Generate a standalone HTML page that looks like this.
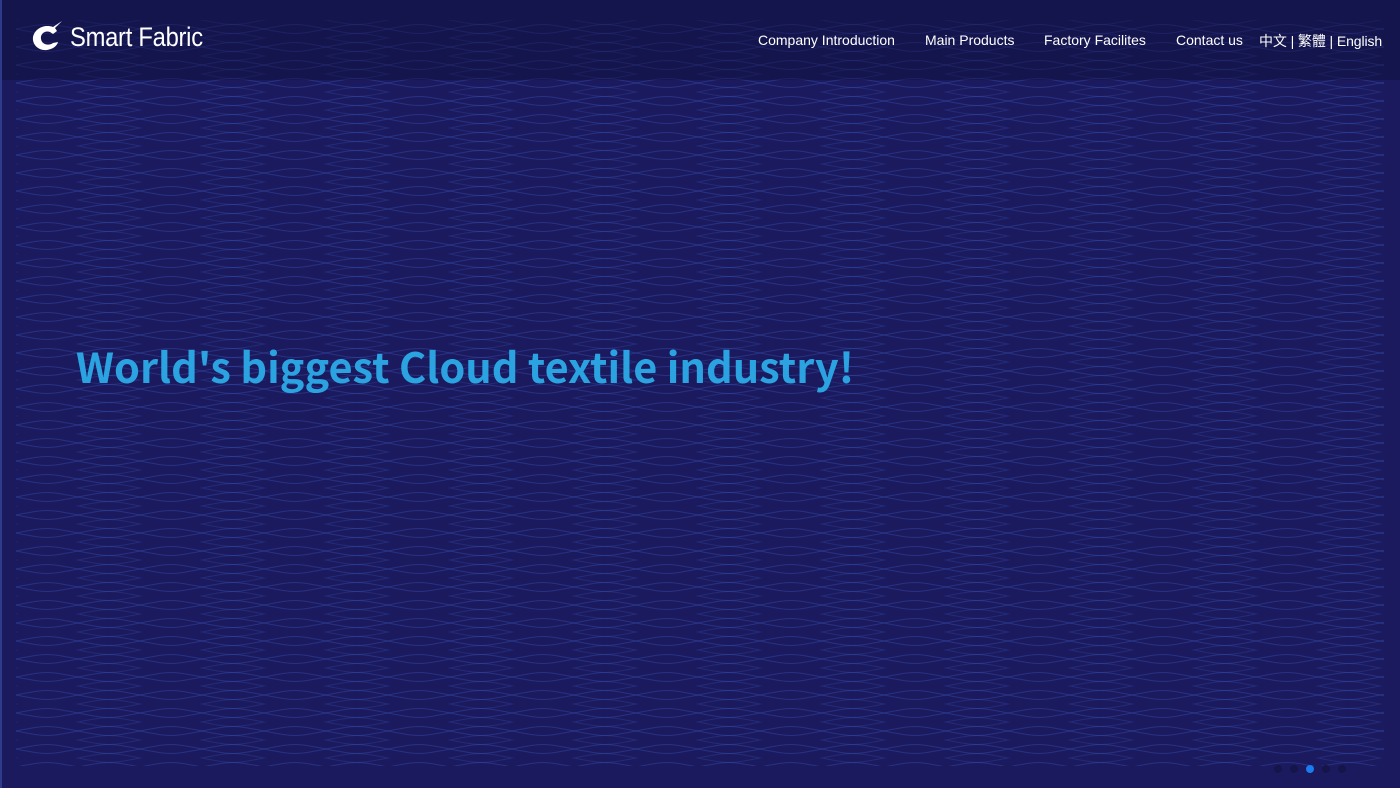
<!DOCTYPE html>
<html><head><meta charset="utf-8"><style>
html,body{margin:0;padding:0;width:1400px;height:800px;overflow:hidden;background:#fff}
.hero{position:absolute;left:0;top:0;width:1400px;height:788px;background:#1b1a5e}
.edge{position:absolute;left:0;top:0;width:2px;height:788px;background:#2e3a8a}
.hdr{position:absolute;left:0;top:0;width:1400px;height:80px;background:rgba(15,15,60,0.45)}
svg.bg{position:absolute;left:16px;top:20px}
.logo{position:absolute;left:31px;top:20px;display:flex;align-items:center}
.logo span{font-family:"Liberation Sans",sans-serif;color:#fff;font-size:27px;margin-left:7px;letter-spacing:-0.3px;transform:scaleX(0.88);transform-origin:left;display:inline-block;position:relative;top:1px}
.nav{position:absolute;top:32px;font-family:"Liberation Sans","Noto Sans CJK SC",sans-serif;font-size:14px;color:#fff;white-space:nowrap}
h1{position:absolute;left:76px;top:335px;margin:0;font-family:"Noto Sans CJK JP",sans-serif;font-weight:700;font-size:41.5px;color:#2aa3e0;letter-spacing:0;white-space:nowrap}
.dots{position:absolute;top:765px;left:1274px;display:flex;gap:8px}
.dots i{width:8px;height:8px;border-radius:50%;background:#15154a;display:block}
.dots i.a{background:#1a7cf0}
</style></head><body>
<div class="hero">
<svg class="bg" width="1368" height="746">
<defs><pattern id="p" width="124" height="18" patternUnits="userSpaceOnUse">
<path d="M0 9 C31 3,31 3,62 9 S93 15,124 9" fill="none" stroke="#3d5cc4" stroke-opacity="0.35" stroke-width="1"/>
<path d="M0 9 C31 15,31 15,62 9 S93 3,124 9" fill="none" stroke="#3d5cc4" stroke-opacity="0.35" stroke-width="1"/>
<path d="M0 0 C31 -6,31 -6,62 0 S93 6,124 0" fill="none" stroke="#3d5cc4" stroke-opacity="0.25" stroke-width="1"/>
<path d="M0 18 C31 24,31 24,62 18 S93 12,124 18" fill="none" stroke="#3d5cc4" stroke-opacity="0.25" stroke-width="1"/>
</pattern></defs>
<rect width="1368" height="746" fill="url(#p)"/>
</svg>
<div class="hdr"></div>
<div class="edge"></div>
<div class="logo">
<svg width="32" height="32" viewBox="0 0 32 32"><path d="M31 1 L22 7 C14 4 4 8 2 17 C1 25 8 31 16 30 C22 29 26 26 27 22 L22 23 C18 26 11 25 10 19 C9 14 14 10 19 12 L22 14 L26 11 L24 8 Z" fill="#fff"/></svg>
<span>Smart Fabric</span>
</div>
<div class="nav" style="left:758px">Company Introduction</div>
<div class="nav" style="left:925px">Main Products</div>
<div class="nav" style="left:1044px">Factory Facilites</div>
<div class="nav" style="left:1176px">Contact us</div>
<div class="nav" style="left:1259px;top:31px;letter-spacing:-0.1px">中文 | 繁體 | English</div>
<h1>World's biggest Cloud textile industry!</h1>
<div class="dots"><i></i><i></i><i class="a"></i><i></i><i></i></div>
</div>
</body></html>
